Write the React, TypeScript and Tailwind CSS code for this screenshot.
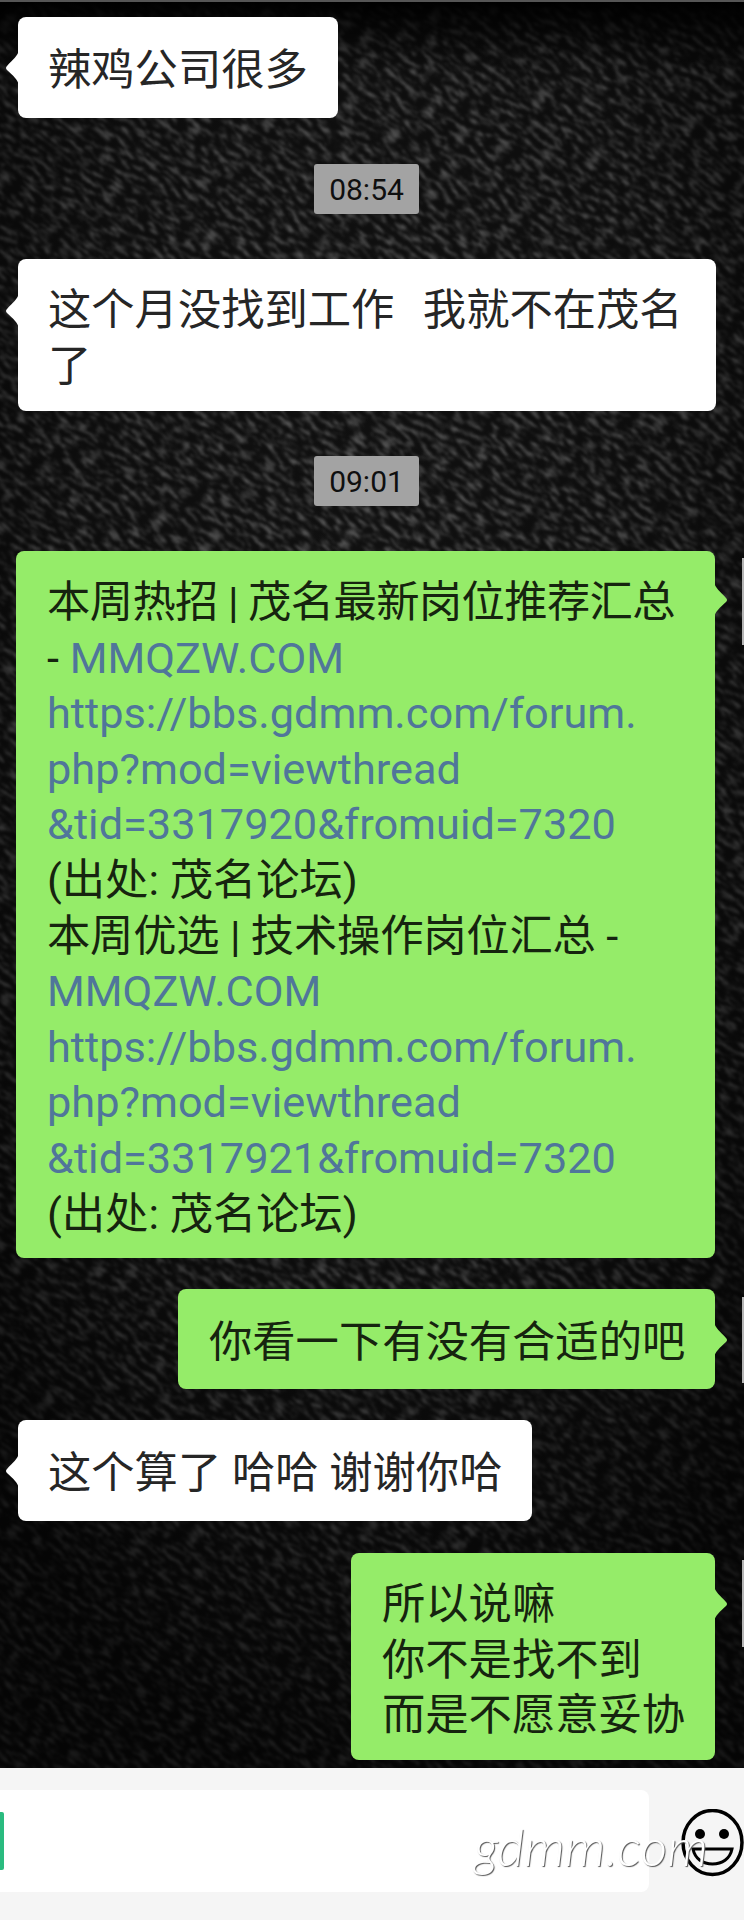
import React from "react";

const font = "[font-family:Roboto,'Noto_Sans_CJK_SC',sans-serif]";

const Texture = () => (
  <svg className="absolute inset-0 w-full h-full" width="744" height="1768">
    <defs>
      <filter id="leather" x="0" y="0" width="100%" height="100%" colorInterpolationFilters="sRGB">
        <feTurbulence type="fractalNoise" baseFrequency="0.075 0.2" numOctaves="3" seed="11" />
        <feColorMatrix values="0 0 0 0 0.34  0 0 0 0 0.34  0 0 0 0 0.34  3 0 0 0 -1.35" />
        <feGaussianBlur stdDeviation="0.8" />
      </filter>
      <radialGradient id="glow" cx="50%" cy="30%" r="72%">
        <stop offset="0%" stopColor="#000" stopOpacity="0" />
        <stop offset="55%" stopColor="#000" stopOpacity="0.2" />
        <stop offset="100%" stopColor="#000" stopOpacity="0.7" />
      </radialGradient>
      <linearGradient id="top" x1="0" y1="0" x2="0" y2="1">
        <stop offset="0%" stopColor="#000" stopOpacity="1" />
        <stop offset="100%" stopColor="#000" stopOpacity="0" />
      </linearGradient>
    </defs>
    <g transform="rotate(38 372 884)">
      <rect x="-600" y="-500" width="1950" height="2800" filter="url(#leather)" />
    </g>
    <rect width="744" height="1768" fill="url(#glow)" />
    <rect width="744" height="70" fill="url(#top)" />
  </svg>
);

const Tail = ({ className, fill }: { className: string; fill: string }) => (
  <svg width="14" height="36" viewBox="0 0 14 36" className={`absolute ${className}`}>
    <path d="M0 0 C1 6 6 9 12 16 Q14 18 12 20 C6 26 1 29 0 36 Z" fill={fill} />
  </svg>
);

const Time = ({ label, className }: { label: string; className: string }) => (
  <div className={`relative self-center -ml-[11px] w-[105px] h-[50px] rounded-[3px] bg-[#a3a3a3] text-[#0f0f0f] text-[30px] flex items-center justify-center ${className}`}>
    {label}
  </div>
);

const Left = ({ children, className, tail }: { children: React.ReactNode; className: string; tail: string }) => (
  <div className={`relative self-start ml-[18px] bg-white rounded-[8px] text-[#262626] text-[43.3px] leading-[56px] pl-[30px] ${className}`}>
    <Tail className={`-left-[13px] -scale-x-100 ${tail}`} fill="#ffffff" />
    {children}
  </div>
);

const Right = ({ children, className, tail }: { children: React.ReactNode; className: string; tail: string }) => (
  <div className={`relative self-end mr-[29px] bg-[#95ec69] rounded-[8px] text-[#16240f] text-[43.3px] leading-[55.6px] ${className}`}>
    <Tail className={`-right-[13px] ${tail}`} fill="#95ec69" />
    {children}
  </div>
);

const Link = ({ children }: { children: React.ReactNode }) => <span className="text-[#50769a]">{children}</span>;

const Smiley = () => (
  <svg width="68" height="70" viewBox="0 0 68 70" className="shrink-0 ml-[29px]">
    <ellipse cx="34.5" cy="33.5" rx="29.5" ry="32" fill="#f5f5f5" stroke="#000" strokeWidth="3.5" />
    <circle cx="22" cy="25" r="5" fill="#000" />
    <circle cx="46" cy="25" r="5" fill="#000" />
    <path d="M15 40 H54 C52 50 44 55 34.5 55 C25 55 17 50 15 40 Z" fill="#f5f5f5" stroke="#000" strokeWidth="3" />
  </svg>
);

const App = () => {
  return (
    <div className={`relative w-[744px] h-[1920px] overflow-hidden flex flex-col bg-[#f5f5f5] ${font}`}>
      <div className="relative h-[1768px] bg-[#101010] flex flex-col pt-[17px] border-t-2 border-[#555]">
        <Texture />
        <div className="absolute right-0 top-[556px] w-[2px] h-[87px] bg-[#b4b4b4]" />
        <div className="absolute right-0 top-[1295px] w-[2px] h-[86px] bg-[#b4b4b4]" />
        <div className="absolute right-0 top-[1558px] w-[2px] h-[87px] bg-[#b4b4b4]" />

        <Left className="w-[320px] h-[101px] pt-[26px] -mt-[2px]" tail="top-[33px]">辣鸡公司很多</Left>
        <Time label="08:54" className="mt-[46px]" />
        <Left className="w-[698px] h-[152px] pt-[24px] mt-[45px]" tail="top-[34px]">
          <div>这个月没找到工作&nbsp;&nbsp;<span className="ml-[7px]">我就不在茂名</span></div>
          <div>了</div>
        </Left>
        <Time label="09:01" className="mt-[45px]" />
        <Right className="w-[699px] h-[707px] pt-[24px] pl-[31px] mt-[45px]" tail="top-[31px]">
          <div className="tracking-[-0.6px]">本周热招 | 茂名最新岗位推荐汇总</div>
          <div>- <Link>MMQZW.COM</Link></div>
          <div><Link>https://bbs.gdmm.com/forum.</Link></div>
          <div><Link>php?mod=viewthread</Link></div>
          <div><Link>&amp;tid=3317920&amp;fromuid=7320</Link></div>
          <div>(出处: 茂名论坛)</div>
          <div className="tracking-[-0.2px]">本周优选 | 技术操作岗位汇总 -</div>
          <div><Link>MMQZW.COM</Link></div>
          <div><Link>https://bbs.gdmm.com/forum.</Link></div>
          <div><Link>php?mod=viewthread</Link></div>
          <div><Link>&amp;tid=3317921&amp;fromuid=7320</Link></div>
          <div>(出处: 茂名论坛)</div>
        </Right>
        <Right className="w-[537px] h-[100px] pt-[26px] pl-[31px] mt-[31px]" tail="top-[33px]">你看一下有没有合适的吧</Right>
        <Left className="w-[514px] h-[101px] pt-[26px] mt-[31px]" tail="top-[33px]">这个算了 哈哈 谢谢你哈</Left>
        <Right className="w-[364px] h-[207px] pt-[24px] pl-[31px] mt-[32px]" tail="top-[33px]">
          <div>所以说嘛</div>
          <div>你不是找不到</div>
          <div>而是不愿意妥协</div>
        </Right>
      </div>

      <div className="relative flex-1 flex items-center">
        <div className="relative shrink-0 -mt-[6px] w-[649px] h-[102px] rounded-r-[8px] bg-white">
          <div className="absolute left-0 top-[22px] w-[4px] h-[58px] rounded-r-[2px] bg-[#2abb7f]" />
        </div>
        <Smiley />
        <div className="absolute left-[474px] top-[46px] text-[52px] leading-[64px] italic font-light text-white [font-family:Lato,sans-serif] [text-shadow:1px_1px_1px_#555]">
          gdmm.com
        </div>
      </div>
    </div>
  );
};

export default App;
